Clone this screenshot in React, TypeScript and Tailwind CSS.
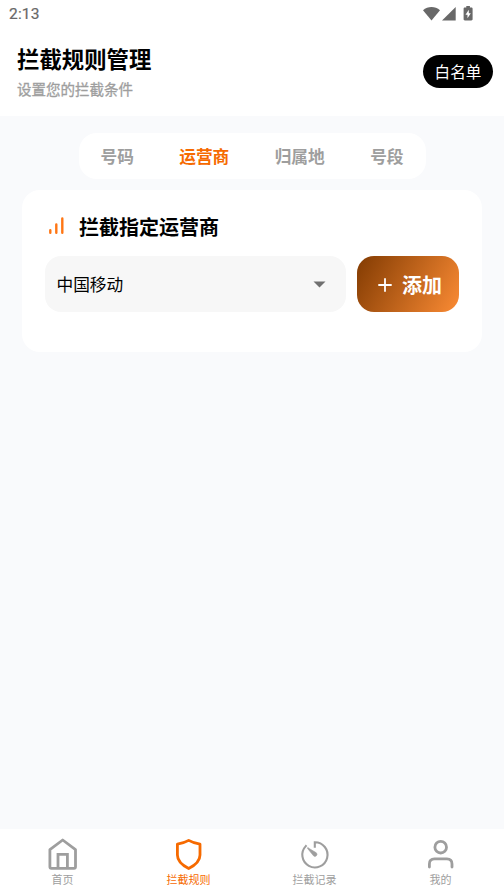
import { useState } from "react";
import type { ReactNode } from "react";

const tabs = ["号码", "运营商", "归属地", "号段"];

function StatusBar() {
    return (
        <div className="flex h-7 items-center justify-between pl-[9px] pr-[31px] text-[#686868]">
            <span className="font-['Roboto',sans-serif] text-[15.5px] leading-7 tracking-[0.2px] [-webkit-text-stroke:0.2px_#686868]">2:13</span>
            <svg width="50" height="16" viewBox="0 0 50 16" fill="currentColor">
                <path d="M0 4.2C4.9-.2 12.1-.2 17 4.2L8.5 14.4Z" />
                <path d="M19 14.5 32.7 1v13.5Z" />
                <path
                    fillRule="evenodd"
                    d="M43.3 0h3.6v1.6h1.4c.8 0 1.3.5 1.3 1.2v10.5c0 .7-.5 1.2-1.3 1.2h-6.4c-.8 0-1.3-.5-1.3-1.2V2.8c0-.7.5-1.2 1.3-1.2h1.4ZM45.8 3.8 42.5 8.7h2v3.6l3.3-5.1h-2Z"
                />
            </svg>
        </div>
    );
}

function HomeIcon() {
    return (
        <svg width="32" height="34" viewBox="0 0 32 34" fill="none" stroke="currentColor" strokeWidth="2.8" strokeLinejoin="round">
            <path d="M2.9 12.6 15.7 3l12.8 9.6v17.2c0 .9-.6 1.5-1.5 1.5H4.4c-.9 0-1.5-.6-1.5-1.5Z" />
            <path d="M11 31V17.4h9.4V31" strokeLinejoin="miter" />
        </svg>
    );
}

function ShieldIcon() {
    return (
        <svg width="32" height="34" viewBox="0 0 32 34" fill="none" stroke="currentColor" strokeWidth="2.8" strokeLinejoin="round">
            <path d="M15.7 3.4c3.6 2.1 7.2 3 11.3 3.8v10.9c0 5.5-4.8 10.2-11.3 13.5C9.2 28.3 4.4 23.6 4.4 18.1V7.2c4.1-.8 7.7-1.7 11.3-3.8Z" />
        </svg>
    );
}

function TimerIcon() {
    return (
        <svg width="32" height="34" viewBox="0 0 32 34" fill="none" stroke="currentColor" strokeWidth="2.1" strokeLinecap="square">
            <path d="M15.8 9.8V5.2a12.6 12.6 0 1 1-9 3.9" />
            <path d="m9.2 10.9 8.1 4.9a2 2 0 0 1-2.8 3L8.6 11.5a.4.4 0 0 1 .6-.6Z" fill="currentColor" stroke="currentColor" strokeWidth=".6" />
        </svg>
    );
}

function UserIcon() {
    return (
        <svg width="32" height="34" viewBox="0 0 32 34" fill="none" stroke="currentColor" strokeWidth="2.8" strokeLinecap="round">
            <circle cx="15.7" cy="10.2" r="5.8" />
            <path d="M4.4 30v-3.1c0-3.1 2-5.1 5.1-5.1h12.4c3.1 0 5.1 2 5.1 5.1V30" />
        </svg>
    );
}

const navItems: { label: string; icon: ReactNode }[] = [
    { label: "首页", icon: <HomeIcon /> },
    { label: "拦截规则", icon: <ShieldIcon /> },
    { label: "拦截记录", icon: <TimerIcon /> },
    { label: "我的", icon: <UserIcon /> },
];

export default function App() {
    const [tab, setTab] = useState(1);
    const [page, setPage] = useState(1);

    return (
        <div className="flex h-screen flex-col bg-[#f9fafc] font-['Noto_Sans_CJK_SC',sans-serif] text-black">
            <header className="h-[116px] shrink-0 bg-white">
                <StatusBar />
                <div className="flex items-start justify-between pl-[17px] pr-[11px] pt-3.5">
                    <div>
                        <h1 className="text-[22.4px] font-bold leading-8">拦截规则管理</h1>
                        <p className="mt-px text-[14.5px] leading-7 text-[#9e9e9e] [-webkit-text-stroke:0.3px_#9e9e9e]">设置您的拦截条件</p>
                    </div>
                    <button className="mt-[13px] h-[33px] w-[70px] rounded-full bg-black text-[15.6px] leading-[33px] text-white">
                        白名单
                    </button>
                </div>
            </header>

            <main className="flex-1 px-[22px] pt-[17px]">
                {/* Rule type tabs */}
                <div className="mx-auto flex h-[46px] w-[347px] items-center justify-between rounded-[18px] bg-white px-[22px] pt-px">
                    {tabs.map((label, i) => (
                        <button
                            key={label}
                            onClick={() => setTab(i)}
                            className={`text-[16.7px] font-bold ${tab === i ? "text-[#f66a00]" : "text-[#9e9e9e]"}`}
                        >
                            {label}
                        </button>
                    ))}
                </div>

                <section className="mt-[11px] h-[162px] rounded-[18px] bg-white px-[23px] pt-[22px]">
                    <div className="flex h-7 items-center">
                        <svg width="22" height="22" viewBox="0 0 22 22" fill="none" stroke="#ff7614" strokeWidth="2.4" strokeLinecap="round">
                            <path d="M5.3 15.3v2.4M11.3 9.4v8.3M17.3 3.4v14.3" />
                        </svg>
                        <h2 className="ml-3 pt-0.5 text-[20px] font-bold">拦截指定运营商</h2>
                    </div>
                    <div className="mt-4 flex gap-[11px]">
                        <button className="flex h-14 flex-1 items-center justify-between rounded-[16px] bg-[#f7f7f7] pl-[11.5px] pr-5 pt-px text-[16.7px]">
                            <span className="pt-px">中国移动</span>
                            <svg width="13" height="7" viewBox="0 0 13 7" fill="#707070">
                                <path d="M.5.5h12l-6 6Z" />
                            </svg>
                        </button>
                        <button className="flex h-14 w-[102px] items-center rounded-[17px] bg-[linear-gradient(119deg,#823b02,#fb8b34)] pl-[21px] pt-px text-[20px] font-bold text-white">
                            <svg width="14" height="14" viewBox="0 0 14 14" stroke="currentColor" strokeWidth="1.8">
                                <path d="M.3 7h13.4M7 .3v13.4" />
                            </svg>
                            <span className="ml-2.5 pt-px">添加</span>
                        </button>
                    </div>
                </section>
            </main>

            <nav className="grid h-[67px] shrink-0 grid-cols-4 bg-white">
                {navItems.map((item, i) => (
                    <button
                        key={item.label}
                        onClick={() => setPage(i)}
                        className={`flex flex-col items-center pt-2 ${page === i ? "text-[#f66a00]" : "text-[#9e9e9e]"}`}
                    >
                        {item.icon}
                        <span className="pr-px text-[11px] leading-4">{item.label}</span>
                    </button>
                ))}
            </nav>
        </div>
    );
}
